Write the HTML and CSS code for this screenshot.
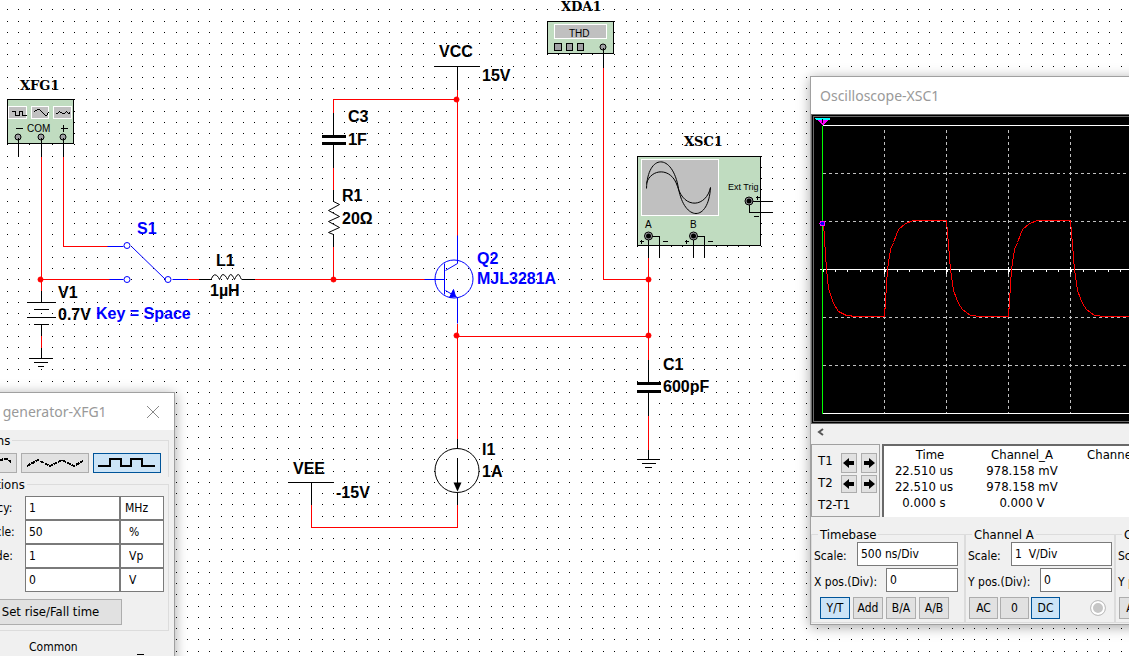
FILE: index.html
```
<!DOCTYPE html>
<html lang="en">
<head>
  <meta charset="UTF-8" />
  <meta name="viewport" content="width=device-width, initial-scale=1.0" />
  <title>Schematic</title>
  <link rel="stylesheet" href="styles.css">
</head>
<body>
<main class="workspace">
  <svg class="schematic" role="img" aria-label="Circuit schematic">
    <defs>
      <pattern id="dots" x="-38" y="-13" width="45" height="45" patternUnits="userSpaceOnUse">
        <path class="dots" d="M0 .5h1m10 0h1m10 0h1m11 0h1M0 11.5h1m10 0h1m10 0h1m11 0h1M0 22.5h1m10 0h1m10 0h1m11 0h1M0 34.5h1m10 0h1m10 0h1m11 0h1" />
      </pattern>
    </defs>
    <rect width="100%" height="100%" fill="url(#dots)" />

    <g transform="translate(.5 .5)">
      <!-- instrument bodies -->
      <g class="box">
        <rect x="7" y="99" width="66" height="44" />
        <rect x="547" y="21" width="66" height="32" />
        <rect x="637" y="156" width="123" height="89" />
      </g>
      <g class="screen">
        <rect x="8" y="106" width="18" height="12" />
        <rect x="31" y="106" width="17" height="12" />
        <rect x="53" y="106" width="18" height="12" />
        <rect x="554" y="24" width="52" height="14" />
        <rect x="641" y="159" width="77" height="56" />
      </g>

      <!-- wires -->
      <g class="wire">
        <path d="M41 156V290M63 156V246H107M41 279H109M41 335V347" />
        <path d="M187 279H198M254 279H424" />
        <path d="M333 112V99H457M457 89V235M333 167V189M333 246V279" />
        <path d="M457 323V438M457 336H648M603 67V279H648M648 256V359M648 415V449" />
        <path d="M311 504V527H457V504" />
      </g>

      <g class="part">
        <path d="M18 137V156M41 137V156M63 137V156" />
        <path d="M41 290V302M26 302H55M33 309H48M26 317H55M33 324H48M41 324V335M41 347V358M29 358H52M33 362H47M37 366H43" />
        <path d="M198 279H211M241 279H254" />
        <path d="M434 66H479M457 66V89M333 112V136M333 143V167M333 189V201M333 234V246" />
        <path d="M457 438V448M457 457V484M457 492V504M288 482H333M311 482V504" />
        <path d="M648 359V383M648 391V415M648 449V459M637 459H659M641 463H655M644 467H651" />
        <path d="M603 47V67M648 236V257M648 236H659V257M693 236V257M693 236H704V257M749 201H772M749 201V212H772" />
        <path d="M15 128H22M60 128H67M63 124V131" />
        <path d="M11 111H15V115H19V111H22V115H26" />
        <path d="M34 111L37 109H39L45 115H46L48 112M55 113H57L59 111L62 113H64L66 111L68 113L70 112" />
        <path d="M639 241H643M641 239V243M662 241H667M684 241H688M686 239V243M707 241H712M755 197H759M757 195V199M753 216H758" />
      </g>
      <g class="part plate">
        <path d="M321 136H345M321 143H345M636 383H660M636 391H660" />
      </g>
      <g class="part curve">
        <path d="M211 279V278Q214 271 218 277L219 279L220 277Q222 271 226 277L227 279L228 277Q230 271 233 277L234 279L235 277Q238 271 240 277L241 279" />
        <path d="M333 201L339 204L328 210L339 216L328 221L339 227L328 232L333 234" />
        <circle cx="456.5" cy="470" r="22" />
        <path d="M646 188C647 153 672 152 678 188C684 221 708 222 710 187" />
        <path d="M646 183C650 168 671 166 677 186C684 210 706 206 710 187" />
      </g>
      <path d="M453 482H461L457 491Z" />

      <!-- switch and transistor -->
      <g class="active">
        <path d="M107 246H123M109 279H123M131 246L165 279M172 279H187" />
        <circle cx="126.5" cy="245" r="3" />
        <circle cx="126.5" cy="279" r="3" />
        <circle cx="167.5" cy="279" r="3" />
        <circle cx="453.5" cy="278.5" r="19" />
        <path d="M424 279H444M457 235V263L445 270M445 290L457 297V323" />
        <path class="thick" d="M444 263V294" />
        <path class="solid" d="M453 289L455 296L449 297Z" />
      </g>

      <g class="node">
        <circle cx="40" cy="279" r="2.5" />
        <circle cx="456" cy="99" r="2.5" />
        <circle cx="333" cy="279" r="2.5" />
        <circle cx="456" cy="335" r="2.5" />
        <circle cx="648" cy="279" r="2.5" />
        <circle cx="648" cy="335" r="2.5" />
      </g>

      <g class="pin">
        <circle cx="17.5" cy="136.5" r="3" />
        <circle cx="40.5" cy="136.5" r="3" />
        <circle cx="62.5" cy="136.5" r="3" />
        <circle cx="602.5" cy="46.5" r="3" />
        <rect x="554" y="43" width="7" height="7" />
        <rect x="566" y="43" width="6" height="7" />
        <rect x="577" y="43" width="6" height="7" />
        <circle cx="648" cy="235.5" r="4" />
        <circle cx="693" cy="235.5" r="4" />
        <circle cx="748.5" cy="200.5" r="4" />
      </g>
      <circle cx="648" cy="235.5" r="2.5" />
      <circle cx="693" cy="235.5" r="2.5" />
      <circle cx="748.5" cy="200.5" r="2.5" />
      <path class="part" d="M18 137V141M41 137V141M63 137V141M603 47V51" />
    </g>

    <g class="name">
      <text x="20" y="90">XFG1</text>
      <text x="561" y="11">XDA1</text>
      <text x="684" y="146">XSC1</text>
    </g>
    <g class="tiny">
      <text x="27" y="132">COM</text>
      <text x="569" y="37">THD</text>
      <text x="645" y="228">A</text>
      <text x="690" y="228">B</text>
      <text class="trig" x="728" y="190">Ext Trig</text>
    </g>
    <g class="label">
      <text x="58" y="298">V1</text>
      <text x="58" y="320">0.7V</text>
      <text x="216" y="266">L1</text>
      <text x="210" y="296">1µH</text>
      <text x="439" y="57">VCC</text>
      <text x="482" y="81">15V</text>
      <text x="348" y="122">C3</text>
      <text x="348" y="145">1F</text>
      <text x="342" y="201">R1</text>
      <text x="342" y="224">20Ω</text>
      <text x="293" y="474">VEE</text>
      <text x="336" y="498">-15V</text>
      <text x="482" y="455">I1</text>
      <text x="482" y="477">1A</text>
      <text x="663" y="370">C1</text>
      <text x="663" y="392">600pF</text>
    </g>
    <g class="label label-active">
      <text x="137" y="234">S1</text>
      <text x="96" y="319">Key = Space</text>
      <text x="477" y="264">Q2</text>
      <text x="477" y="284">MJL3281A</text>
    </g>
  </svg>

  <section class="window generator">
    <header class="title">
      <h2>Function generator-XFG1</h2>
      <button class="close" type="button" aria-label="Close">
        <svg width="14" height="14"><path d="M1 1L13 13M13 1L1 13" /></svg>
      </button>
    </header>
    <div class="generator-body">
      <fieldset class="waveforms">
        <legend>Waveforms</legend>
        <div class="waves">
          <button class="btn" type="button" aria-label="Sine">
            <svg width="58" height="12"><path d="M1 9L8 4L14 2H20L26 5L32 9H38L44 4L50 2H53L57 5" /></svg>
          </button>
          <button class="btn" type="button" aria-label="Triangle">
            <svg width="58" height="12"><path d="M1 9L12 3L24 9L36 3L48 9L57 4" /></svg>
          </button>
          <button class="btn selected" type="button" aria-label="Square">
            <svg width="58" height="12"><path class="square" d="M0 9H12V2H23V9H33V2H44V9H57" /></svg>
          </button>
        </div>
      </fieldset>
      <fieldset class="options">
        <legend>Signal options</legend>
        <div class="option">
          <label for="freq">Frequency:</label>
          <input id="freq" type="text" value="1" />
          <input class="unit wide" type="text" value="MHz" aria-label="Frequency unit" />
        </div>
        <div class="option">
          <label for="duty">Duty cycle:</label>
          <input id="duty" type="text" value="50" />
          <input class="unit" type="text" value="%" aria-label="Duty cycle unit" />
        </div>
        <div class="option">
          <label for="amp">Amplitude:</label>
          <input id="amp" type="text" value="1" />
          <input class="unit" type="text" value="Vp" aria-label="Amplitude unit" />
        </div>
        <div class="option">
          <label for="offset">Offset:</label>
          <input id="offset" type="text" value="0" />
          <input class="unit" type="text" value="V" aria-label="Offset unit" />
        </div>
        <button class="btn rise" type="button">Set rise/Fall time</button>
      </fieldset>
      <div class="outputs">
        <span>Common</span>
        <span class="minus"></span>
      </div>
    </div>
  </section>

  <section class="window scope">
    <header class="title">
      <h2>Oscilloscope-XSC1</h2>
    </header>
    <svg class="display" role="img" aria-label="Channel A trace">
      <g transform="translate(.5 .5)">
        <path class="grid" d="M70 12V296M132 12V296M194 12V296M256 12V296M318 12V296M380 12V296M8 56H460M8 104H460M8 200H460M8 248H460" />
        <path class="axis" d="M8 8H460M5 152H460M8 296H460" />
        <path class="ticks" d="M8 153H460" />
        <path class="axis" d="M70 149V156M132 149V156M194 149V156M256 149V156M318 149V156" />
        <path class="cursor" d="M8 8V296" />
        <path class="trace" d="M9 106L12 152L14 171L19 186L24 194L32 198L42 199H70L73 152L76 132L79 125L84 112L91 106L99 103H132L136 152L139 173L144 186L148 192L156 198L166 199H194L197 152L200 132L203 125L208 112L215 106L223 103H256L260 152L263 173L268 186L272 192L280 198L290 199H318L321 152" />
        <path class="mark-top" d="M0 0H16L15 2H1Z" />
        <path class="mark" d="M2 2H14L8 8Z" />
        <path class="mark-one" d="M8 1V5" />
        <circle class="probe" cx="8" cy="106" r="2.5" />
      </g>
    </svg>
    <div class="scroll">
      <button type="button" aria-label="Scroll left">
        <svg width="8" height="8"><path d="M6 1L2 4L6 7" /></svg>
      </button>
    </div>
    <div class="readout">
      <div class="cursors">
        <span>T1</span>
        <button class="btn" type="button" aria-label="T1 left"><svg width="12" height="12"><path d="M0 6L6 1V4H11V8H6V11Z" /></svg></button>
        <button class="btn" type="button" aria-label="T1 right"><svg width="12" height="12"><path d="M12 6L6 1V4H1V8H6V11Z" /></svg></button>
        <span>T2</span>
        <button class="btn" type="button" aria-label="T2 left"><svg width="12" height="12"><path d="M0 6L6 1V4H11V8H6V11Z" /></svg></button>
        <button class="btn" type="button" aria-label="T2 right"><svg width="12" height="12"><path d="M12 6L6 1V4H1V8H6V11Z" /></svg></button>
        <span class="diff">T2-T1</span>
      </div>
      <div class="values">
        <table>
          <thead>
            <tr><th>Time</th><th>Channel_A</th><th>Channel_B</th></tr>
          </thead>
          <tbody>
            <tr><td>22.510 us</td><td>978.158 mV</td><td></td></tr>
            <tr><td>22.510 us</td><td>978.158 mV</td><td></td></tr>
            <tr><td>0.000 s</td><td>0.000 V</td><td></td></tr>
          </tbody>
        </table>
      </div>
    </div>
    <div class="settings">
      <fieldset class="timebase">
        <legend>Timebase</legend>
        <div class="row">
          <label for="tb-scale">Scale:</label>
          <input class="long" id="tb-scale" type="text" value="500 ns/Div" />
        </div>
        <div class="row">
          <label for="tb-pos">X pos.(Div):</label>
          <input id="tb-pos" type="text" value="0" />
        </div>
        <div class="modes">
          <button class="btn selected" type="button">Y/T</button>
          <button class="btn" type="button">Add</button>
          <button class="btn" type="button">B/A</button>
          <button class="btn" type="button">A/B</button>
        </div>
      </fieldset>
      <fieldset class="channel">
        <legend>Channel A</legend>
        <div class="row">
          <label for="a-scale">Scale:</label>
          <input class="long" id="a-scale" type="text" value="1  V/Div" />
        </div>
        <div class="row">
          <label for="a-pos">Y pos.(Div):</label>
          <input id="a-pos" type="text" value="0" />
        </div>
        <div class="modes">
          <button class="btn" type="button">AC</button>
          <button class="btn" type="button">0</button>
          <button class="btn selected" type="button">DC</button>
          <input type="radio" name="channel" aria-label="Channel A" checked />
        </div>
      </fieldset>
      <fieldset class="channel">
        <legend>Channel B</legend>
        <div class="row">
          <label for="b-scale">Scale:</label>
          <input class="long" id="b-scale" type="text" value="" />
        </div>
        <div class="row">
          <label for="b-pos">Y pos.(Div):</label>
          <input id="b-pos" type="text" value="" />
        </div>
        <div class="modes">
          <button class="btn" type="button">AC</button>
        </div>
      </fieldset>
    </div>
  </section>
</main>
</body>
</html>
```
FILE: styles.css
```
* {
  box-sizing: border-box;
}
body {
  margin: 0;
  background: #fff;
  color: #000;
  font-family: "DejaVu Sans Condensed", "Noto Sans", sans-serif;
  font-size: 12px;
  line-height: 16px;
}
button,
input {
  font: inherit;
  color: inherit;
}
.workspace {
  position: relative;
  min-height: 100vh;
  overflow: hidden;
}

/* schematic */
.schematic {
  display: block;
  width: 100%;
  height: 100vh;
}
.dots {
  stroke: #000;
  shape-rendering: crispEdges;
}
.box rect {
  fill: #c0dcc0;
  stroke: #000;
  shape-rendering: crispEdges;
}
.screen rect {
  fill: #c0c0c0;
  stroke: #fff;
  shape-rendering: crispEdges;
}
.wire {
  fill: none;
  stroke: #f00;
  shape-rendering: crispEdges;
}
.part {
  fill: none;
  stroke: #000;
  shape-rendering: crispEdges;
}
.plate {
  stroke-width: 3;
}
.curve {
  shape-rendering: auto;
}
.active {
  fill: none;
  stroke: #00f;
}
.active .solid {
  fill: #00f;
}
.node {
  fill: #f00;
  stroke: #f00;
}
.pin {
  fill: #a0a0a4;
  stroke: #000;
}
.name {
  font: bold 13px "DejaVu Serif", serif;
}
.tiny {
  font: 10px "Liberation Sans", Arial, sans-serif;
}
.trig {
  font-size: 9px;
}
.label {
  font: bold 16px "Liberation Sans", Arial, sans-serif;
}
.label-active {
  fill: #00f;
}

/* instrument windows */
.window {
  position: absolute;
  background: #f0f0f0;
  border: 1px solid #a0a0a0;
  box-shadow: 0 2px 12px rgba(0, 0, 0, .35);
}
.title {
  display: flex;
  justify-content: space-between;
  align-items: center;
  height: 37px;
  padding: 0 9px;
  background: #fff;
}
.title h2 {
  margin: 0;
  color: #999;
  font: 14px/20px "Noto Sans", "Open Sans", sans-serif;
  white-space: nowrap;
}
.close {
  display: flex;
  padding: 0;
  border: 0;
  background: none;
}
.close path {
  fill: none;
  stroke: #888;
}
fieldset {
  min-width: 0;
  margin: 0;
  padding: 0;
  border: 1px solid #dcdcdc;
}
legend {
  padding: 0 2px;
  margin-left: 6px;
  font-size: 13px;
  line-height: 15px;
}
.btn {
  display: flex;
  justify-content: center;
  align-items: center;
  padding: 0;
  border: 1px solid #adadad;
  background: #e1e1e1;
  white-space: nowrap;
}
.btn.selected {
  border-color: #005499;
  background: #cce4f7;
}
input[type="text"] {
  min-width: 0;
  height: 24px;
  padding: 0 3px 1px;
  border: 1px solid #7a7a7a;
  border-radius: 0;
  background: #fff;
}

/* function generator */
.generator {
  left: -75px;
  top: 392px;
  width: 250px;
  height: 330px;
}
.generator .title {
  padding: 0 14px 0 16px;
}
.generator-body {
  padding: 3px 5px 0;
}
.waveforms {
  border-bottom: 0;
}
.waveforms legend {
  margin-left: 11px;
}
.waves {
  display: flex;
  justify-content: flex-end;
  gap: 4px;
  padding: 5px 7px 4px 0;
}
.waves .btn {
  flex: 0 0 68px;
  height: 20px;
}
.waves path {
  fill: none;
  stroke: #000;
  stroke-width: 2;
  stroke-dasharray: 4 1;
  shape-rendering: crispEdges;
}
.waves .square {
  stroke-dasharray: none;
}
.options {
  padding: 4px 4px 5px 8px;
}
.options legend {
  margin-left: 0;
}
.option {
  display: flex;
  align-items: center;
}
.option label {
  flex: 1;
  padding-left: 14px;
}
.option input {
  width: 95px;
}
.option .unit {
  width: 44px;
  padding-left: 8px;
}
.option .wide {
  padding-left: 4px;
}
.rise {
  width: 143px;
  height: 26px;
  margin: 7px 0 0 39px;
  font-size: 13px;
}
.outputs {
  display: flex;
  align-items: flex-end;
  gap: 59px;
  padding: 8px 0 0 98px;
}
.minus {
  width: 7px;
  border-bottom: 1px solid #000;
}

/* oscilloscope */
.scope {
  left: 810px;
  top: 76px;
  width: 470px;
}
.display {
  display: block;
  width: 100%;
  height: 310px;
  border: 3px double #696969;
  background: #000;
  shape-rendering: crispEdges;
}
.display path {
  fill: none;
}
.display .grid {
  stroke: #c0c0c0;
  stroke-dasharray: 3 3;
}
.display .axis {
  stroke: #fff;
}
.display .ticks {
  stroke: #fff;
  stroke-width: 3;
  stroke-dasharray: 1 11.4;
}
.display .cursor {
  stroke: #0f0;
}
.display .trace {
  stroke: #f00;
}
.display .mark-top {
  fill: #0ff;
}
.display .mark {
  fill: #f0f;
}
.display .mark-one {
  stroke: #000;
}
.display .probe {
  fill: #00f;
  stroke: #f0f;
}
.scroll {
  height: 20px;
  padding: 0 6px;
}
.scroll button {
  display: flex;
  padding: 4px 0;
  border: 0;
  background: none;
}
.scroll path {
  fill: none;
  stroke: #555;
  stroke-width: 2;
}
.readout {
  display: flex;
  gap: 2px;
  height: 73px;
  font-size: 13px;
}
.cursors {
  display: grid;
  grid-template-columns: 19px 16px 16px;
  grid-template-rows: 20px 18px 18px;
  gap: 2px 4px;
  width: 69px;
  padding: 8px 2px 0 6px;
  border: 1px solid #a0a0a0;
}
.cursors .diff {
  grid-column: 1 / 4;
  padding-top: 2px;
}
.values {
  flex: 1;
  padding-top: 1px;
  border: 2px solid #696969;
  border-width: 2px 0 0 2px;
  background: #fff;
}
.values table {
  width: 276px;
  table-layout: fixed;
  border-collapse: collapse;
}
.values th,
.values td {
  padding: 0;
  font-weight: normal;
  text-align: center;
}
.values th:last-child {
  padding-left: 8px;
}
.values td:first-child {
  padding-right: 12px;
}
.settings {
  display: flex;
  padding: 10px 0 1px;
}
.timebase {
  flex: 0 0 154px;
  padding-right: 6px;
}
.channel {
  flex: 0 0 150px;
  padding-right: 2px;
}
.row {
  display: flex;
  justify-content: space-between;
  align-items: center;
  margin-bottom: 2px;
  padding-left: 2px;
}
.row label {
  padding-top: 4px;
  white-space: nowrap;
}
.row input {
  width: 72px;
}
.row .long {
  width: 101px;
}
.modes {
  display: flex;
  align-items: center;
  gap: 2px;
  padding: 3px 0;
}
.modes .btn {
  flex: 0 0 29px;
  height: 22px;
}
.timebase .modes {
  gap: 3px;
  padding-left: 8px;
}
.timebase .btn {
  flex-basis: 30px;
}
.channel .modes {
  padding-left: 3px;
}
.modes input[type="radio"] {
  appearance: none;
  width: 16px;
  height: 16px;
  margin: 0 6px 0 auto;
  border: 1px solid #c0c0c0;
  border-radius: 50%;
  background: #c6c6c6;
  box-shadow: inset 0 0 0 2px #fff;
}
```
